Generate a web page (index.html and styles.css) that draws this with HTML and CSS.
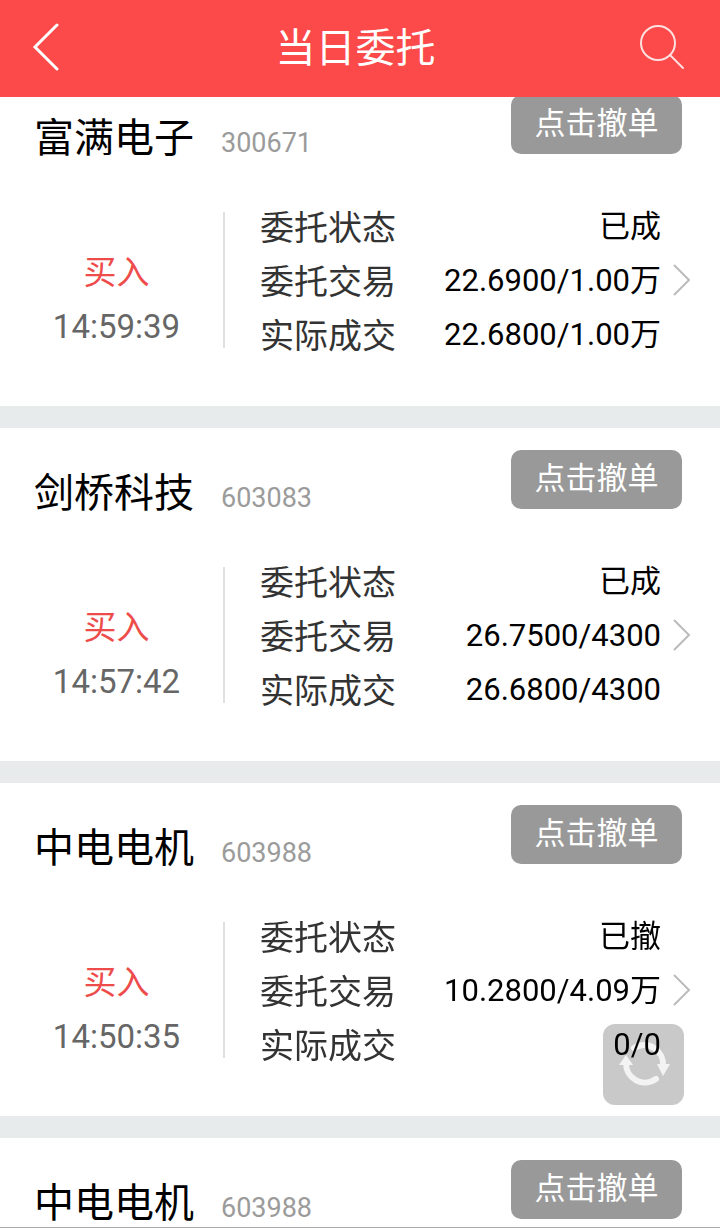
FILE: index.html
```html
<!DOCTYPE html>
<html lang="zh-CN">
<head>
  <meta charset="UTF-8">
  <meta name="viewport" content="width=device-width, initial-scale=1">
  <title>当日委托</title>
  <link rel="stylesheet" href="styles.css">
</head>
<body>
  <header class="topbar">
    <button class="icon-btn" aria-label="返回">
      <svg width="28" height="48" viewBox="0 0 28 48"><path d="M25 2 L3 24 L25 46"/></svg>
    </button>
    <h1>当日委托</h1>
    <button class="icon-btn search" aria-label="搜索">
      <svg width="46" height="46" viewBox="0 0 46 46"><circle cx="19" cy="19" r="17"/><path d="M31 31 L44 44"/></svg>
    </button>
  </header>

  <main class="orders">
    <section class="order">
      <div class="order-head">
        <h2>富满电子</h2>
        <span class="code">300671</span>
        <button class="cancel">点击撤单</button>
      </div>
      <div class="order-body">
        <div class="side">
          <span class="buy">买入</span>
          <time>14:59:39</time>
        </div>
        <dl>
          <div><dt>委托状态</dt><dd>已成</dd></div>
          <div><dt>委托交易</dt><dd>22.6900/1.00万</dd></div>
          <div><dt>实际成交</dt><dd>22.6800/1.00万</dd></div>
        </dl>
        <a class="more" href="#" aria-label="详情"><svg width="20" height="34" viewBox="0 0 20 34"><path d="M2 2 L17 17 L2 32"/></svg></a>
      </div>
    </section>

    <section class="order">
      <div class="order-head">
        <h2>剑桥科技</h2>
        <span class="code">603083</span>
        <button class="cancel">点击撤单</button>
      </div>
      <div class="order-body">
        <div class="side">
          <span class="buy">买入</span>
          <time>14:57:42</time>
        </div>
        <dl>
          <div><dt>委托状态</dt><dd>已成</dd></div>
          <div><dt>委托交易</dt><dd>26.7500/4300</dd></div>
          <div><dt>实际成交</dt><dd>26.6800/4300</dd></div>
        </dl>
        <a class="more" href="#" aria-label="详情"><svg width="20" height="34" viewBox="0 0 20 34"><path d="M2 2 L17 17 L2 32"/></svg></a>
      </div>
    </section>

    <section class="order">
      <div class="order-head">
        <h2>中电电机</h2>
        <span class="code">603988</span>
        <button class="cancel">点击撤单</button>
      </div>
      <div class="order-body">
        <div class="side">
          <span class="buy">买入</span>
          <time>14:50:35</time>
        </div>
        <dl>
          <div><dt>委托状态</dt><dd>已撤</dd></div>
          <div><dt>委托交易</dt><dd>10.2800/4.09万</dd></div>
          <div><dt>实际成交</dt><dd>0/0</dd></div>
        </dl>
        <a class="more" href="#" aria-label="详情"><svg width="20" height="34" viewBox="0 0 20 34"><path d="M2 2 L17 17 L2 32"/></svg></a>
      </div>
    </section>

    <section class="order">
      <div class="order-head">
        <h2>中电电机</h2>
        <span class="code">603988</span>
        <button class="cancel">点击撤单</button>
      </div>
    </section>
  </main>

  <button class="refresh" aria-label="刷新">
    <svg width="81" height="81" viewBox="0 0 81 81">
      <path class="arc" d="M31 24 A19 19 0 0 1 60 42"/>
      <path class="arc" d="M53 55 A19 19 0 0 1 23 39"/>
      <path class="tip" d="M54 40 H67 L60 52 Z"/>
      <path class="tip" d="M16 41 H30 L23 31 Z"/>
    </svg>
  </button>
</body>
</html>
```
FILE: styles.css
```css
* { box-sizing: border-box; }
body {
  margin: 0;
  height: 100vh;
  display: flex;
  flex-direction: column;
  font-family: Roboto, "Noto Sans CJK SC", sans-serif;
  background: #e7ebec;
  color: #000;
  border-bottom: 1px solid #aaa;
}
button { font-family: inherit; border: none; padding: 0; cursor: pointer; }
h1, h2, dl, dd { margin: 0; font-weight: 400; }
svg { display: block; fill: none; }

.topbar {
  flex: none;
  display: flex;
  align-items: center;
  justify-content: space-between;
  height: 97px;
  padding: 0 35px 4px 32px;
  background: #fc4949;
  color: #fff;
  position: relative;
  z-index: 2;
}
.topbar h1 { padding-top: 4px; font-size: 40px; line-height: 56px; }
.icon-btn { width: 40px; background: none; }
.icon-btn svg { stroke: #fff; stroke-width: 3; stroke-linecap: round; }
.search { width: 46px; }
.search svg { stroke: #ffe0e0; stroke-width: 2; }

/* list is scrolled a little under the top bar */
.orders { flex: 1; min-height: 0; margin-top: -24px; overflow: hidden; }
.order { height: 333px; margin-bottom: 22px; background: #fff; }
.order-head { display: flex; align-items: baseline; padding: 22px 38px 0 34px; }
.order-head h2 { font-size: 40px; line-height: 88px; }
.code { margin-left: 27px; font-size: 27px; color: #9b9b9b; }
.cancel {
  align-self: flex-start;
  margin-left: auto;
  width: 171px;
  height: 59px;
  padding-bottom: 8px;
  border-radius: 10px;
  background: #999;
  color: #fff;
  font-size: 31px;
}

.order-body { display: flex; align-items: center; padding: 15px 28px 0 0; }
.side {
  width: 225px;
  height: 136px;
  display: flex;
  flex-direction: column;
  align-items: center;
  padding: 34px 0 0 10px;
  border-right: 2px solid #e0e0e0;
}
.side span, .side time { line-height: 54px; font-size: 33px; }
.buy { color: #ee4b4b; }
.side time { color: #666; }
/* values stay readable above the refresh button */
dl { flex: 1; padding: 2px 11px 0 35px; position: relative; z-index: 1; pointer-events: none; }
dl div { display: flex; justify-content: space-between; line-height: 54px; height: 54px; }
dt { font-size: 34px; line-height: 56px; color: #333; }
dd { font-size: 31px; }
.more svg { stroke: #bbb; stroke-width: 2; }

.refresh {
  position: fixed;
  right: 36px;
  bottom: 123px;
  border-radius: 12px;
  background: #c9c9c9;
}
.arc { stroke: #f3f3f3; stroke-width: 6; stroke-linecap: round; }
.tip { fill: #f3f3f3; }
```
